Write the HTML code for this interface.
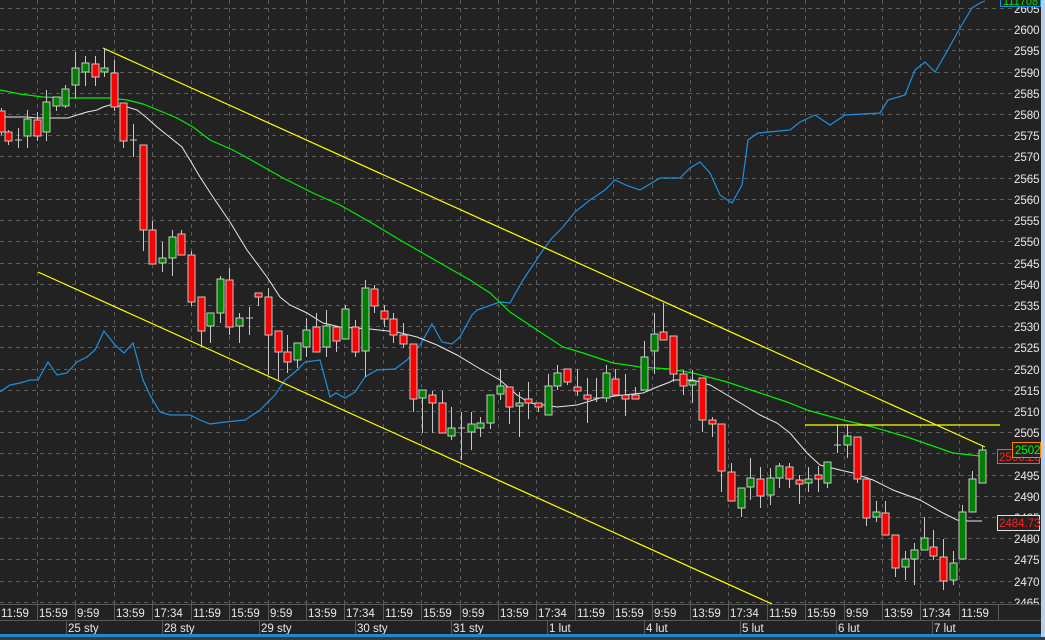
<!DOCTYPE html>
<html><head><meta charset="utf-8"><style>
html,body{margin:0;padding:0;background:#222222;width:1045px;height:640px;overflow:hidden}
svg{display:block}
text{font-family:"Liberation Sans",Arial,sans-serif}
</style></head><body>
<svg width="1045" height="640" viewBox="0 0 1045 640" xmlns="http://www.w3.org/2000/svg">
<rect width="1045" height="640" fill="#222222"/>
<g stroke="#5a5a5a" stroke-width="1" stroke-dasharray="4,4" fill="none">
<path d="M0 8.5H1040M0 29.5H1040M0 50.5H1040M0 72.5H1040M0 93.5H1040M0 114.5H1040M0 135.5H1040M0 156.5H1040M0 178.5H1040M0 199.5H1040M0 220.5H1040M0 241.5H1040M0 263.5H1040M0 284.5H1040M0 305.5H1040M0 326.5H1040M0 347.5H1040M0 369.5H1040M0 390.5H1040M0 411.5H1040M0 432.5H1040M0 453.5H1040M0 475.5H1040M0 496.5H1040M0 517.5H1040M0 538.5H1040M0 559.5H1040M0 581.5H1040M0 602.5H1040"/>
<path d="M37.5 0V604M75.5 0V604M114.5 0V604M152.5 0V604M191.5 0V604M229.5 0V604M268.5 0V604M306.5 0V604M344.5 0V604M383.5 0V604M421.5 0V604M460.5 0V604M498.5 0V604M536.5 0V604M575.5 0V604M613.5 0V604M652.5 0V604M690.5 0V604M728.5 0V604M767.5 0V604M805.5 0V604M844.5 0V604M882.5 0V604M920.5 0V604M959.5 0V604"/>
</g>
<!-- blue line -->
<polyline fill="none" stroke="#1e90e0" stroke-width="1.2" points="0,392 10,385 20,383 30,380 38,380 48,362 57,375 67,373 77,362 87,357 95,350 104,331 115,345 124,353 133,343 143,380 150,395 160,412 170,415 190,415 200,420 210,424 225,422 245,420 260,410 275,395 285,380 295,372 305,362 320,360 330,397 336,393 345,398 355,392 365,377 377,370 395,369 407,360 420,345 432,324 442,342 452,344 460,337 472,315 477,310 500,302 510,303 523,280 535,262 543,250 552,238 562,228 575,212 590,200 605,190 615,180 628,186 640,190 660,178 680,178 690,168 700,162 710,173 720,195 732,203 742,185 748,140 758,133 790,130 800,122 815,115 830,125 845,115 880,113 888,100 905,95 915,70 925,62 935,72 945,55 960,28 972,8 980,3 985,1"/>
<!-- green MA -->
<polyline fill="none" stroke="#00ee00" stroke-width="1.2" points="0,90 20,94 43,97 67,98 110,98 127,100 143,104 153,108 177,118 193,127 210,140 233,150 260,165 283,178 313,193 340,205 370,222 400,240 440,263 470,280 490,293 510,312 537,330 563,347 583,353 613,363 640,367 670,369 693,373 727,382 760,393 787,402 807,410 843,420 873,427 907,437 953,453 980,456"/>
<!-- white MA -->
<polyline fill="none" stroke="#e8e8e8" stroke-width="1" points="0,116 7,117 27,117 37,118 68,118 77,115 87,112 97,110 103,107 110,105 127,107 137,110 147,118 157,127 167,135 182,147 190,160 200,177 213,197 230,222 247,250 267,277 280,297 290,305 307,313 323,323 340,327 370,329 397,332 417,337 437,345 457,355 477,367 500,380 517,395 530,403 557,407 577,405 600,398 623,395 643,393 657,387 670,382 673,380 693,380 710,385 727,395 747,407 760,415 777,423 790,433 807,453 820,465 840,470 853,473 873,480 893,490 920,500 943,513 957,520 968,521 982,521"/>
<!-- yellow lines -->
<g stroke="#ffff00" stroke-width="1.2" fill="none">
<line x1="103" y1="48" x2="985" y2="447"/>
<line x1="38" y1="272" x2="772" y2="604"/>
<line x1="805" y1="425" x2="1000" y2="425"/>
</g>
<!-- candles -->
<g stroke="#c8c8c8" stroke-width="1">
<line x1="1.5" y1="108" x2="1.5" y2="135"/><rect x="-2" y="111" width="7" height="21" fill="#ff0000"/>
<line x1="8.5" y1="130" x2="8.5" y2="145"/><rect x="5" y="132" width="7" height="9" fill="#ff0000"/>
<line x1="18.5" y1="128" x2="18.5" y2="148"/><line x1="15" y1="140" x2="22" y2="140"/>
<line x1="27.5" y1="110" x2="27.5" y2="148"/><rect x="24" y="119" width="7" height="17" fill="#008000"/>
<line x1="37.5" y1="112" x2="37.5" y2="141"/><rect x="34" y="120" width="7" height="16" fill="#ff0000"/>
<line x1="46.5" y1="90" x2="46.5" y2="141"/><rect x="43" y="102" width="7" height="30" fill="#008000"/>
<line x1="56.5" y1="97" x2="56.5" y2="111"/><rect x="53" y="97" width="7" height="9" fill="#008000"/>
<line x1="65.5" y1="85" x2="65.5" y2="108"/><rect x="62" y="89" width="7" height="17" fill="#008000"/>
<line x1="75.5" y1="52" x2="75.5" y2="98"/><rect x="72" y="68" width="7" height="17" fill="#008000"/>
<line x1="85.5" y1="56" x2="85.5" y2="86"/><rect x="82" y="63" width="7" height="9" fill="#008000"/>
<line x1="95.5" y1="56" x2="95.5" y2="86"/><rect x="92" y="64" width="7" height="13" fill="#ff0000"/>
<line x1="104.5" y1="48" x2="104.5" y2="77"/><rect x="101" y="68" width="7" height="4" fill="#008000"/>
<line x1="114.5" y1="60" x2="114.5" y2="111"/><rect x="111" y="73" width="7" height="34" fill="#ff0000"/>
<line x1="123.5" y1="103" x2="123.5" y2="148"/><rect x="120" y="103" width="7" height="38" fill="#ff0000"/>
<line x1="133.5" y1="124" x2="133.5" y2="157"/><line x1="130" y1="140" x2="137" y2="140"/>
<line x1="143.5" y1="145" x2="143.5" y2="251"/><rect x="140" y="145" width="7" height="85" fill="#ff0000"/>
<line x1="152.5" y1="221" x2="152.5" y2="264"/><rect x="149" y="230" width="7" height="34" fill="#ff0000"/>
<line x1="162.5" y1="242" x2="162.5" y2="272"/><rect x="159" y="258" width="7" height="5" fill="#008000"/>
<line x1="172.5" y1="230" x2="172.5" y2="276"/><rect x="169" y="237" width="7" height="21" fill="#008000"/>
<line x1="181.5" y1="230" x2="181.5" y2="255"/><rect x="178" y="234" width="7" height="21" fill="#ff0000"/>
<line x1="191.5" y1="251" x2="191.5" y2="306"/><rect x="188" y="255" width="7" height="47" fill="#ff0000"/>
<line x1="201.5" y1="297" x2="201.5" y2="347"/><rect x="198" y="297" width="7" height="34" fill="#ff0000"/>
<line x1="210.5" y1="313" x2="210.5" y2="343"/><rect x="207" y="313" width="7" height="13" fill="#008000"/>
<line x1="220.5" y1="276" x2="220.5" y2="323"/><rect x="217" y="279" width="7" height="34" fill="#008000"/>
<line x1="229.5" y1="268" x2="229.5" y2="335"/><rect x="226" y="280" width="7" height="47" fill="#ff0000"/>
<line x1="239.5" y1="313" x2="239.5" y2="343"/><rect x="236" y="318" width="7" height="8" fill="#008000"/>
<line x1="249.5" y1="307" x2="249.5" y2="335"/><line x1="246" y1="318" x2="253" y2="318"/>
<line x1="258.5" y1="293" x2="258.5" y2="306"/><rect x="255" y="293" width="7" height="4" fill="#ff0000"/>
<line x1="268.5" y1="288" x2="268.5" y2="375"/><rect x="265" y="297" width="7" height="38" fill="#ff0000"/>
<line x1="278.5" y1="331" x2="278.5" y2="380"/><rect x="275" y="331" width="7" height="21" fill="#ff0000"/>
<line x1="287.5" y1="335" x2="287.5" y2="373"/><rect x="284" y="352" width="7" height="10" fill="#ff0000"/>
<line x1="297.5" y1="343" x2="297.5" y2="368"/><rect x="294" y="343" width="7" height="17" fill="#008000"/>
<line x1="306.5" y1="318" x2="306.5" y2="357"/><rect x="303" y="330" width="7" height="17" fill="#008000"/>
<line x1="316.5" y1="313" x2="316.5" y2="352"/><rect x="313" y="327" width="7" height="25" fill="#ff0000"/>
<line x1="326.5" y1="310" x2="326.5" y2="357"/><rect x="323" y="326" width="7" height="21" fill="#008000"/>
<line x1="336.5" y1="327" x2="336.5" y2="352"/><rect x="333" y="327" width="7" height="14" fill="#ff0000"/>
<line x1="345.5" y1="305" x2="345.5" y2="339"/><rect x="342" y="309" width="7" height="30" fill="#008000"/>
<line x1="355.5" y1="320" x2="355.5" y2="357"/><rect x="352" y="327" width="7" height="25" fill="#ff0000"/>
<line x1="365.5" y1="280" x2="365.5" y2="377"/><rect x="362" y="288" width="7" height="63" fill="#008000"/>
<line x1="374.5" y1="285" x2="374.5" y2="313"/><rect x="371" y="289" width="7" height="17" fill="#ff0000"/>
<line x1="384.5" y1="305" x2="384.5" y2="327"/><rect x="381" y="311" width="7" height="8" fill="#ff0000"/>
<line x1="393.5" y1="313" x2="393.5" y2="343"/><rect x="390" y="319" width="7" height="16" fill="#ff0000"/>
<line x1="403.5" y1="323" x2="403.5" y2="348"/><rect x="400" y="335" width="7" height="9" fill="#ff0000"/>
<line x1="413.5" y1="344" x2="413.5" y2="412"/><rect x="410" y="344" width="7" height="55" fill="#ff0000"/>
<line x1="422.5" y1="390" x2="422.5" y2="433"/><rect x="419" y="390" width="7" height="8" fill="#008000"/>
<line x1="432.5" y1="391" x2="432.5" y2="433"/><rect x="429" y="395" width="7" height="8" fill="#ff0000"/>
<line x1="442.5" y1="391" x2="442.5" y2="433"/><rect x="439" y="403" width="7" height="30" fill="#ff0000"/>
<line x1="451.5" y1="407" x2="451.5" y2="440"/><rect x="448" y="428" width="7" height="8" fill="#008000"/>
<line x1="461.5" y1="412" x2="461.5" y2="460"/><line x1="458" y1="428" x2="465" y2="428"/>
<line x1="471.5" y1="412" x2="471.5" y2="450"/><rect x="468" y="424" width="7" height="8" fill="#008000"/>
<line x1="480.5" y1="417" x2="480.5" y2="437"/><rect x="477" y="423" width="7" height="5" fill="#008000"/>
<line x1="490.5" y1="395" x2="490.5" y2="429"/><rect x="487" y="395" width="7" height="28" fill="#008000"/>
<line x1="500.5" y1="369" x2="500.5" y2="400"/><rect x="497" y="386" width="7" height="8" fill="#008000"/>
<line x1="509.5" y1="387" x2="509.5" y2="424"/><rect x="506" y="387" width="7" height="20" fill="#ff0000"/>
<line x1="519.5" y1="392" x2="519.5" y2="437"/><rect x="516" y="403" width="7" height="3" fill="#008000"/>
<line x1="528.5" y1="382" x2="528.5" y2="419"/><rect x="525" y="399" width="7" height="4" fill="#ff0000"/>
<line x1="538.5" y1="403" x2="538.5" y2="412"/><rect x="535" y="403" width="7" height="4" fill="#ff0000"/>
<line x1="548.5" y1="374" x2="548.5" y2="415"/><rect x="545" y="386" width="7" height="29" fill="#008000"/>
<line x1="557.5" y1="365" x2="557.5" y2="390"/><rect x="554" y="373" width="7" height="13" fill="#008000"/>
<line x1="567.5" y1="369" x2="567.5" y2="385"/><rect x="564" y="369" width="7" height="13" fill="#ff0000"/>
<line x1="577.5" y1="369" x2="577.5" y2="396"/><rect x="574" y="387" width="7" height="4" fill="#ff0000"/>
<line x1="587.5" y1="378" x2="587.5" y2="423"/><rect x="584" y="395" width="7" height="4" fill="#ff0000"/>
<line x1="596.5" y1="378" x2="596.5" y2="402"/><line x1="593" y1="398" x2="600" y2="398"/>
<line x1="606.5" y1="365" x2="606.5" y2="402"/><rect x="603" y="373" width="7" height="25" fill="#008000"/>
<line x1="615.5" y1="369" x2="615.5" y2="395"/><rect x="612" y="379" width="7" height="16" fill="#ff0000"/>
<line x1="625.5" y1="374" x2="625.5" y2="416"/><rect x="622" y="395" width="7" height="4" fill="#ff0000"/>
<line x1="635.5" y1="387" x2="635.5" y2="399"/><rect x="632" y="395" width="7" height="4" fill="#ff0000"/>
<line x1="644.5" y1="341" x2="644.5" y2="390"/><rect x="641" y="357" width="7" height="33" fill="#008000"/>
<line x1="654.5" y1="313" x2="654.5" y2="374"/><rect x="651" y="334" width="7" height="17" fill="#008000"/>
<line x1="663.5" y1="303" x2="663.5" y2="340"/><rect x="660" y="332" width="7" height="8" fill="#ff0000"/>
<line x1="673.5" y1="336" x2="673.5" y2="382"/><rect x="670" y="336" width="7" height="38" fill="#ff0000"/>
<line x1="683.5" y1="370" x2="683.5" y2="395"/><rect x="680" y="374" width="7" height="12" fill="#ff0000"/>
<line x1="692.5" y1="370" x2="692.5" y2="403"/><rect x="689" y="381" width="7" height="4" fill="#008000"/>
<line x1="702.5" y1="378" x2="702.5" y2="432"/><rect x="699" y="378" width="7" height="42" fill="#ff0000"/>
<line x1="712.5" y1="417" x2="712.5" y2="437"/><rect x="709" y="420" width="7" height="4" fill="#ff0000"/>
<line x1="721.5" y1="424" x2="721.5" y2="492"/><rect x="718" y="424" width="7" height="47" fill="#ff0000"/>
<line x1="731.5" y1="463" x2="731.5" y2="501"/><rect x="728" y="472" width="7" height="29" fill="#ff0000"/>
<line x1="741.5" y1="488" x2="741.5" y2="517"/><rect x="738" y="488" width="7" height="20" fill="#008000"/>
<line x1="750.5" y1="458" x2="750.5" y2="500"/><rect x="747" y="478" width="7" height="9" fill="#008000"/>
<line x1="760.5" y1="467" x2="760.5" y2="508"/><rect x="757" y="479" width="7" height="17" fill="#ff0000"/>
<line x1="770.5" y1="468" x2="770.5" y2="505"/><rect x="767" y="478" width="7" height="17" fill="#008000"/>
<line x1="779.5" y1="463" x2="779.5" y2="488"/><rect x="776" y="466" width="7" height="12" fill="#008000"/>
<line x1="789.5" y1="463" x2="789.5" y2="488"/><rect x="786" y="467" width="7" height="12" fill="#ff0000"/>
<line x1="799.5" y1="475" x2="799.5" y2="504"/><rect x="796" y="480" width="7" height="4" fill="#ff0000"/>
<line x1="808.5" y1="467" x2="808.5" y2="492"/><rect x="805" y="479" width="7" height="4" fill="#008000"/>
<line x1="818.5" y1="466" x2="818.5" y2="492"/><rect x="815" y="475" width="7" height="4" fill="#ff0000"/>
<line x1="827.5" y1="462" x2="827.5" y2="488"/><rect x="824" y="462" width="7" height="21" fill="#008000"/>
<line x1="837.5" y1="424" x2="837.5" y2="453"/><line x1="834" y1="445" x2="841" y2="445"/>
<line x1="847.5" y1="424" x2="847.5" y2="458"/><rect x="844" y="436" width="7" height="9" fill="#008000"/>
<line x1="857.5" y1="437" x2="857.5" y2="483"/><rect x="854" y="437" width="7" height="42" fill="#ff0000"/>
<line x1="866.5" y1="479" x2="866.5" y2="526"/><rect x="863" y="479" width="7" height="39" fill="#ff0000"/>
<line x1="876.5" y1="501" x2="876.5" y2="522"/><rect x="873" y="512" width="7" height="5" fill="#008000"/>
<line x1="885.5" y1="501" x2="885.5" y2="535"/><rect x="882" y="513" width="7" height="22" fill="#ff0000"/>
<line x1="895.5" y1="535" x2="895.5" y2="577"/><rect x="892" y="535" width="7" height="33" fill="#ff0000"/>
<line x1="905.5" y1="551" x2="905.5" y2="580"/><rect x="902" y="559" width="7" height="8" fill="#008000"/>
<line x1="914.5" y1="543" x2="914.5" y2="585"/><rect x="911" y="550" width="7" height="9" fill="#008000"/>
<line x1="924.5" y1="517" x2="924.5" y2="550"/><rect x="921" y="538" width="7" height="12" fill="#008000"/>
<line x1="933.5" y1="530" x2="933.5" y2="560"/><rect x="930" y="547" width="7" height="9" fill="#ff0000"/>
<line x1="943.5" y1="539" x2="943.5" y2="590"/><rect x="940" y="557" width="7" height="24" fill="#ff0000"/>
<line x1="953.5" y1="551" x2="953.5" y2="585"/><rect x="950" y="563" width="7" height="17" fill="#008000"/>
<line x1="962.5" y1="505" x2="962.5" y2="559"/><rect x="959" y="512" width="7" height="47" fill="#008000"/>
<line x1="972.5" y1="471" x2="972.5" y2="512"/><rect x="969" y="479" width="7" height="33" fill="#008000"/>
<line x1="982.5" y1="446" x2="982.5" y2="483"/><rect x="979" y="450" width="7" height="33" fill="#008000"/>
</g>
<!-- price labels -->
<g fill="#e8e8e8" font-size="11.5">
<text x="1014" y="13">2605</text><text x="1014" y="34">2600</text><text x="1014" y="55">2595</text><text x="1014" y="77">2590</text><text x="1014" y="98">2585</text><text x="1014" y="119">2580</text><text x="1014" y="140">2575</text><text x="1014" y="161">2570</text><text x="1014" y="183">2565</text><text x="1014" y="204">2560</text><text x="1014" y="225">2555</text><text x="1014" y="246">2550</text><text x="1014" y="268">2545</text><text x="1014" y="289">2540</text><text x="1014" y="310">2535</text><text x="1014" y="331">2530</text><text x="1014" y="352">2525</text><text x="1014" y="374">2520</text><text x="1014" y="395">2515</text><text x="1014" y="416">2510</text><text x="1014" y="437">2505</text><text x="1014" y="480">2495</text><text x="1014" y="501">2490</text><text x="1014" y="522">2485</text><text x="1014" y="543">2480</text><text x="1014" y="564">2475</text><text x="1014" y="586">2470</text><text x="1014" y="607">2465</text>
</g>
<rect x="997.5" y="449.5" width="42" height="14" fill="#222" stroke="#00dd00"/>
<text x="999" y="461" fill="#ff2020" font-size="11.5">2500.26</text>
<rect x="1012.5" y="442.5" width="28" height="15" fill="#222" stroke="#ff8000"/>
<text x="1015" y="454" fill="#00ff00" font-size="11.5">2502</text>
<rect x="997.5" y="515.5" width="42" height="15" fill="#222" stroke="#e0e0e0"/>
<text x="999" y="527" fill="#ff2020" font-size="11.5">2484.73</text>
<rect x="1000.5" y="-5.5" width="40" height="12" fill="#222" stroke="#1e90e0"/>
<text x="1003" y="5" fill="#00dd00" font-size="11">111708</text>
<rect x="1041" y="0" width="4" height="640" fill="#b8d0e8"/>
<!-- time axis -->
<rect x="0" y="604" width="1041" height="36" fill="#222"/>
<g stroke="#5a5a5a"><line x1="0" y1="604.5" x2="1041" y2="604.5"/><line x1="0" y1="620.5" x2="1041" y2="620.5"/>
<path d="M37.5 604V620M75.5 604V620M114.5 604V620M152.5 604V620M191.5 604V620M229.5 604V620M268.5 604V620M306.5 604V620M344.5 604V620M383.5 604V620M421.5 604V620M460.5 604V620M498.5 604V620M536.5 604V620M575.5 604V620M613.5 604V620M652.5 604V620M690.5 604V620M728.5 604V620M767.5 604V620M805.5 604V620M844.5 604V620M882.5 604V620M920.5 604V620M959.5 604V620M998.5 604V620"/>
<path d="M66.5 620V634M162.5 620V634M259.5 620V634M355.5 620V634M451.5 620V634M547.5 620V634M644.5 620V634M740.5 620V634M836.5 620V634M932.5 620V634"/></g>
<g fill="#e8e8e8" font-size="11.5">
<text x="1" y="617">11:59</text><text x="39" y="617">15:59</text><text x="77" y="617">9:59</text><text x="116" y="617">13:59</text><text x="154" y="617">17:34</text><text x="193" y="617">11:59</text><text x="231" y="617">15:59</text><text x="270" y="617">9:59</text><text x="308" y="617">13:59</text><text x="346" y="617">17:34</text><text x="385" y="617">11:59</text><text x="423" y="617">15:59</text><text x="462" y="617">9:59</text><text x="500" y="617">13:59</text><text x="538" y="617">17:34</text><text x="577" y="617">11:59</text><text x="615" y="617">15:59</text><text x="654" y="617">9:59</text><text x="692" y="617">13:59</text><text x="730" y="617">17:34</text><text x="769" y="617">11:59</text><text x="807" y="617">15:59</text><text x="846" y="617">9:59</text><text x="884" y="617">13:59</text><text x="922" y="617">17:34</text><text x="961" y="617">11:59</text>
<text x="68" y="632">25 sty</text><text x="164" y="632">28 sty</text><text x="261" y="632">29 sty</text><text x="357" y="632">30 sty</text><text x="453" y="632">31 sty</text><text x="549" y="632">1 lut</text><text x="646" y="632">4 lut</text><text x="742" y="632">5 lut</text><text x="838" y="632">6 lut</text><text x="934" y="632">7 lut</text>
</g>
<rect x="0" y="634" width="1041" height="3" fill="#1e88d0"/>
<rect x="0" y="637" width="1045" height="3" fill="#3a3a3a"/>
</svg>
</body></html>
